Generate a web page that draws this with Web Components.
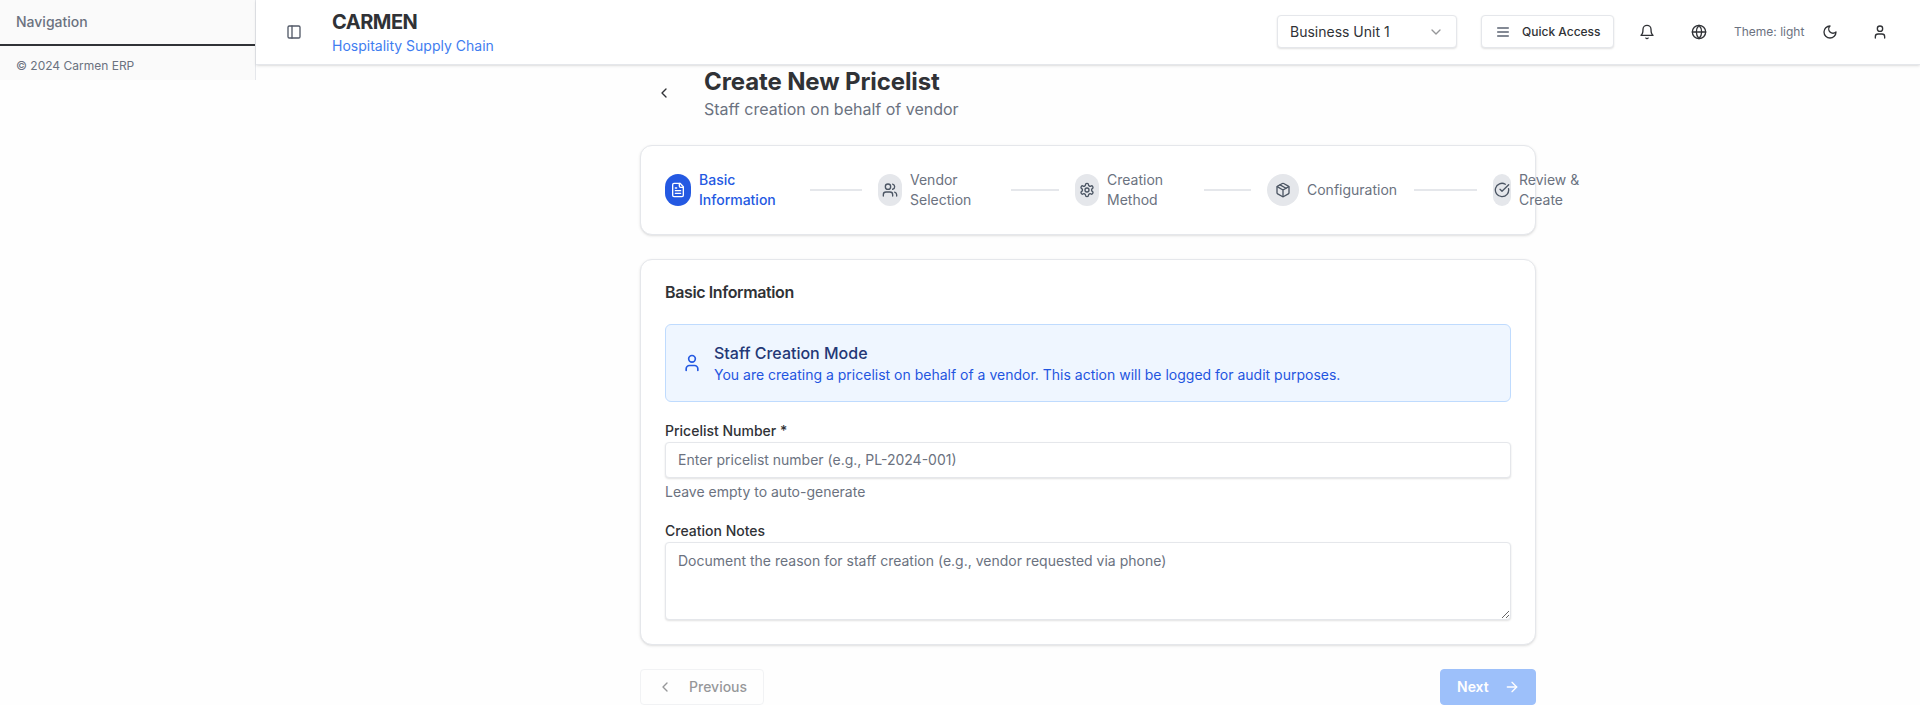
<!DOCTYPE html>
<html lang="en">
<head>
<meta charset="utf-8">
<title>Create New Pricelist</title>
<style>
html,body{margin:0;height:705px;overflow:hidden;background:#fefefe}
body{font-family:Inter,"Liberation Sans",sans-serif;color:#303236;font-size:14px;line-height:20px}
</style>
</head>
<body>
<erp-app></erp-app>
<script>
const define = (name, html, setup) => {
  const t = document.createElement('template');
  t.innerHTML = html;
  customElements.define(name, class extends HTMLElement {
    constructor() {
      super();
      this.attachShadow({ mode: 'open' }).append(t.content.cloneNode(true));
    }
    connectedCallback() { if (setup) setup(this, this.shadowRoot); }
  });
};

const ICONS = {
  panel: '<rect width="18" height="18" x="3" y="3" rx="2"/><path d="M9 3v18"/>',
  down: '<path d="m6 9 6 6 6-6"/>',
  left: '<path d="m15 18-6-6 6-6"/>',
  arrow: '<path d="M5 12h14"/><path d="m12 5 7 7-7 7"/>',
  menu: '<path d="M4 6h16M4 12h16M4 18h16"/>',
  bell: '<path d="M6 8a6 6 0 0 1 12 0c0 7 3 9 3 9H3s3-2 3-9"/><path d="M10.3 21a1.94 1.94 0 0 0 3.4 0"/>',
  globe: '<circle cx="12" cy="12" r="10"/><path d="M12 2a14.5 14.5 0 0 0 0 20 14.5 14.5 0 0 0 0-20"/><path d="M2 12h20"/>',
  moon: '<path d="M12 3a6 6 0 0 0 9 9 9 9 0 1 1-9-9Z"/>',
  user: '<path d="M19 21v-2a4 4 0 0 0-4-4H9a4 4 0 0 0-4 4v2"/><circle cx="12" cy="7" r="4"/>',
  file: '<path d="M15 2H6a2 2 0 0 0-2 2v16a2 2 0 0 0 2 2h12a2 2 0 0 0 2-2V7Z"/><path d="M14 2v4a2 2 0 0 0 2 2h4M10 9H8M16 13H8M16 17H8"/>',
  users: '<path d="M16 21v-2a4 4 0 0 0-4-4H6a4 4 0 0 0-4 4v2"/><circle cx="9" cy="7" r="4"/><path d="M22 21v-2a4 4 0 0 0-3-3.87M16 3.13a4 4 0 0 1 0 7.75"/>',
  gear: '<path d="M12.22 2h-.44a2 2 0 0 0-2 2v.18a2 2 0 0 1-1 1.73l-.43.25a2 2 0 0 1-2 0l-.15-.08a2 2 0 0 0-2.73.73l-.22.38a2 2 0 0 0 .73 2.73l.15.1a2 2 0 0 1 1 1.72v.51a2 2 0 0 1-1 1.74l-.15.09a2 2 0 0 0-.73 2.73l.22.38a2 2 0 0 0 2.73.73l.15-.08a2 2 0 0 1 2 0l.43.25a2 2 0 0 1 1 1.73V20a2 2 0 0 0 2 2h.44a2 2 0 0 0 2-2v-.18a2 2 0 0 1 1-1.73l.43-.25a2 2 0 0 1 2 0l.15.08a2 2 0 0 0 2.73-.73l.22-.39a2 2 0 0 0-.73-2.73l-.15-.08a2 2 0 0 1-1-1.74v-.5a2 2 0 0 1 1-1.74l.15-.09a2 2 0 0 0 .73-2.73l-.22-.38a2 2 0 0 0-2.73-.73l-.15.08a2 2 0 0 1-2 0l-.43-.25a2 2 0 0 1-1-1.73V4a2 2 0 0 0-2-2z"/><circle cx="12" cy="12" r="3"/>',
  box: '<path d="m7.5 4.27 9 5.15"/><path d="M21 8a2 2 0 0 0-1-1.73l-7-4a2 2 0 0 0-2 0l-7 4A2 2 0 0 0 3 8v8a2 2 0 0 0 1 1.73l7 4a2 2 0 0 0 2 0l7-4A2 2 0 0 0 21 16Z"/><path d="m3.3 7 8.7 5 8.7-5M12 22V12"/>',
  check: '<path d="M21.801 10A10 10 0 1 1 17 3.335"/><path d="m9 11 3 3L22 4"/>'
};

define('ui-icon', `<style>
:host{display:block;flex:none;width:var(--size,16px);height:var(--size,16px)}
svg{display:block;width:100%;height:100%;fill:none;stroke:currentColor;stroke-width:2;stroke-linecap:round;stroke-linejoin:round}
</style><svg viewBox="0 0 24 24"></svg>`, (el, root) => {
  root.querySelector('svg').innerHTML = ICONS[el.getAttribute('name')];
});

define('ui-card', `<style>
:host{display:block;box-sizing:border-box;padding:24px;border:1px solid #e5e7eb;border-radius:12px;background:#fff;box-shadow:0 1px 3px rgba(0,0,0,.1),0 1px 2px -1px rgba(0,0,0,.1)}
</style><slot></slot>`);

define('ui-button', `<style>
:host{display:flex;box-sizing:border-box;align-items:center;height:36px;border:1px solid #e5e7eb;border-radius:4px;background:#fff;box-shadow:0 1px 2px rgba(0,0,0,.12);font-weight:500;white-space:nowrap}
:host([faded]){opacity:.5;box-shadow:none}
:host([primary]){background:#3f83f8;border-color:#3f83f8;color:#fff}
</style><slot></slot>`);

define('side-nav', `<style>
:host{display:block;flex:none;box-sizing:border-box;width:256px;height:80px;background:#fafafa;border-right:1px solid #e5e7eb;color:#6b7280}
.head{box-sizing:border-box;height:46px;padding:12px 16px;border-bottom:2px solid #303236;font-weight:500}
.foot{padding:12px 16px 0;font-size:12px;line-height:16px}
</style><div class="head">Navigation</div><div class="foot">© 2024 Carmen ERP</div>`);

define('app-header', `<style>
:host{display:flex;box-sizing:border-box;height:65px;align-items:center;padding:0 32px 1px 30px;background:#fff;border-bottom:1px solid #e5e7eb;box-shadow:0 1px 3px rgba(0,0,0,.1),0 1px 2px -1px rgba(0,0,0,.1);position:relative;z-index:1}
.panel{color:#535a68}
.brand{margin-left:30px}
.name{font-size:20px;line-height:28px;font-weight:700;letter-spacing:-.5px}
.tag{line-height:20px;color:#3f7df0}
.grow{flex:1}
ui-button{height:33px}
.unit{width:180px;padding:0 12px;justify-content:space-between;font-weight:400}
.unit ui-icon{opacity:.5}
.quick{width:133px;margin-left:24px;padding:0 13px;gap:11px;font-size:12px}
.quick ui-icon{color:#5b6372}
.theme{font-size:12px;color:#6b7280;margin-left:27px;width:70px;white-space:nowrap}
</style>
<ui-icon class="panel" name="panel"></ui-icon>
<div class="brand"><div class="name">CARMEN</div><div class="tag">Hospitality Supply Chain</div></div>
<div class="grow"></div>
<ui-button class="unit"><span>Business Unit 1</span><ui-icon name="down"></ui-icon></ui-button>
<ui-button class="quick"><ui-icon name="menu"></ui-icon><span>Quick Access</span></ui-button>
<ui-icon name="bell" style="margin-left:25px"></ui-icon>
<ui-icon name="globe" style="margin-left:36px"></ui-icon>
<span class="theme">Theme: light</span>
<ui-icon name="moon" style="margin-left:18px"></ui-icon>
<ui-icon name="user" style="margin-left:34px"></ui-icon>`);

define('page-title', `<style>
:host{display:flex;align-items:center;height:56px;padding-left:16px}
.text{margin-left:32px}
.title{font-size:24px;line-height:32px;padding-top:1px;margin-bottom:-1px;font-weight:700;letter-spacing:-.11px}
.sub{font-size:16px;line-height:24px;color:#6b7280}
</style><ui-icon name="left"></ui-icon>
<div class="text"><div class="title">Create New Pricelist</div><div class="sub">Staff creation on behalf of vendor</div></div>`);

define('wizard-step', `<style>
:host{display:flex;flex:none;align-items:center;color:#6b7280;font-weight:400}
.dot{display:flex;flex:none;width:var(--dot);height:32px;border-radius:16px;background:#e5e7eb;color:#4b5563;align-items:center;justify-content:center}
.label{margin-left:8px;white-space:nowrap}
:host([active]){color:#2459e2;font-weight:500}
:host([active]) .dot{background:#2459e2;color:#fff}
</style><div class="dot"></div><div class="label"><slot></slot></div>`, (el, root) => {
  const icon = document.createElement('ui-icon');
  icon.setAttribute('name', el.getAttribute('icon'));
  root.querySelector('.dot').replaceChildren(icon);
});

define('wizard-steps', `<style>
:host{display:flex;align-items:center;height:40px}
wizard-step{width:var(--w)}
i{flex:none;height:2px;width:var(--w);margin-right:16px;background:#e5e7eb}
</style>
<wizard-step active icon="file" style="--dot:26px;--w:145px">Basic<br>Information</wizard-step><i style="--w:52px"></i>
<wizard-step icon="users" style="--dot:24px;--w:133px">Vendor<br>Selection</wizard-step><i style="--w:48px"></i>
<wizard-step icon="gear" style="--dot:24px;--w:129px">Creation<br>Method</wizard-step><i style="--w:47px"></i>
<wizard-step icon="box" style="--dot:32px;--w:147px">Configuration</wizard-step><i style="--w:63px"></i>
<wizard-step icon="check" style="--dot:18px;--w:100px">Review &amp;<br>Create</wizard-step>`);

define('mode-notice', `<style>
:host{display:flex;box-sizing:border-box;height:78px;align-items:center;gap:12px;padding:0 16px;border:1px solid #bfdbfe;border-radius:6px;background:#eff6ff;color:#2459e2}
ui-icon{--size:20px}
.title{font-size:16px;line-height:24px;font-weight:500;color:#233876}
.text{color:#1f55e0}
</style><ui-icon name="user"></ui-icon>
<div><div class="title">Staff Creation Mode</div><div class="text">You are creating a pricelist on behalf of a vendor. This action will be logged for audit purposes.</div></div>`);

define('basic-form', `<style>
:host{display:block}
h2{margin:-4px 0 20px;font-size:16px;line-height:24px;font-weight:600;letter-spacing:-.38px}
label{display:block;font-weight:500;line-height:20px;margin:19px 0 1px}
input,textarea{display:block;box-sizing:border-box;width:100%;margin:0;border:1px solid #e5e7eb;border-radius:4px;background:#fff;padding:0 12px;font:inherit;color:inherit;outline:0;box-shadow:0 1px 2px rgba(0,0,0,.12)}
input{height:36px;padding-bottom:2px}
textarea{height:78px;padding:8px 12px}
::placeholder{color:#6b7280;opacity:1}
p{margin:4px 0 0;color:#6b7280}
</style>
<h2>Basic Information</h2>
<mode-notice></mode-notice>
<label for="number">Pricelist Number *</label>
<input id="number" placeholder="Enter pricelist number (e.g., PL-2024-001)">
<p>Leave empty to auto-generate</p>
<label for="notes">Creation Notes</label>
<textarea id="notes" placeholder="Document the reason for staff creation (e.g., vendor requested via phone)"></textarea>`);

define('erp-app', `<style>
:host{display:flex;align-items:flex-start;width:1920px}
.main{flex:1}
.content{width:896px;margin:0 auto}
.foot{display:flex;justify-content:space-between;margin-top:24px}
.prev{width:124px;padding-left:16px;gap:16px}
.next{width:96px;padding:0 15px 0 16px;justify-content:space-between;font-weight:600}
</style>
<side-nav></side-nav>
<div class="main">
<app-header></app-header>
<div class="content">
<page-title></page-title>
<ui-card style="margin-top:24px;height:90px"><wizard-steps></wizard-steps></ui-card>
<ui-card style="margin-top:24px;height:386px"><basic-form></basic-form></ui-card>
<div class="foot"><ui-button class="prev" faded><ui-icon name="left"></ui-icon><span>Previous</span></ui-button>
<ui-button class="next" faded primary><span>Next</span><ui-icon name="arrow"></ui-icon></ui-button></div>
</div></div>`);
</script>
</body>
</html>
